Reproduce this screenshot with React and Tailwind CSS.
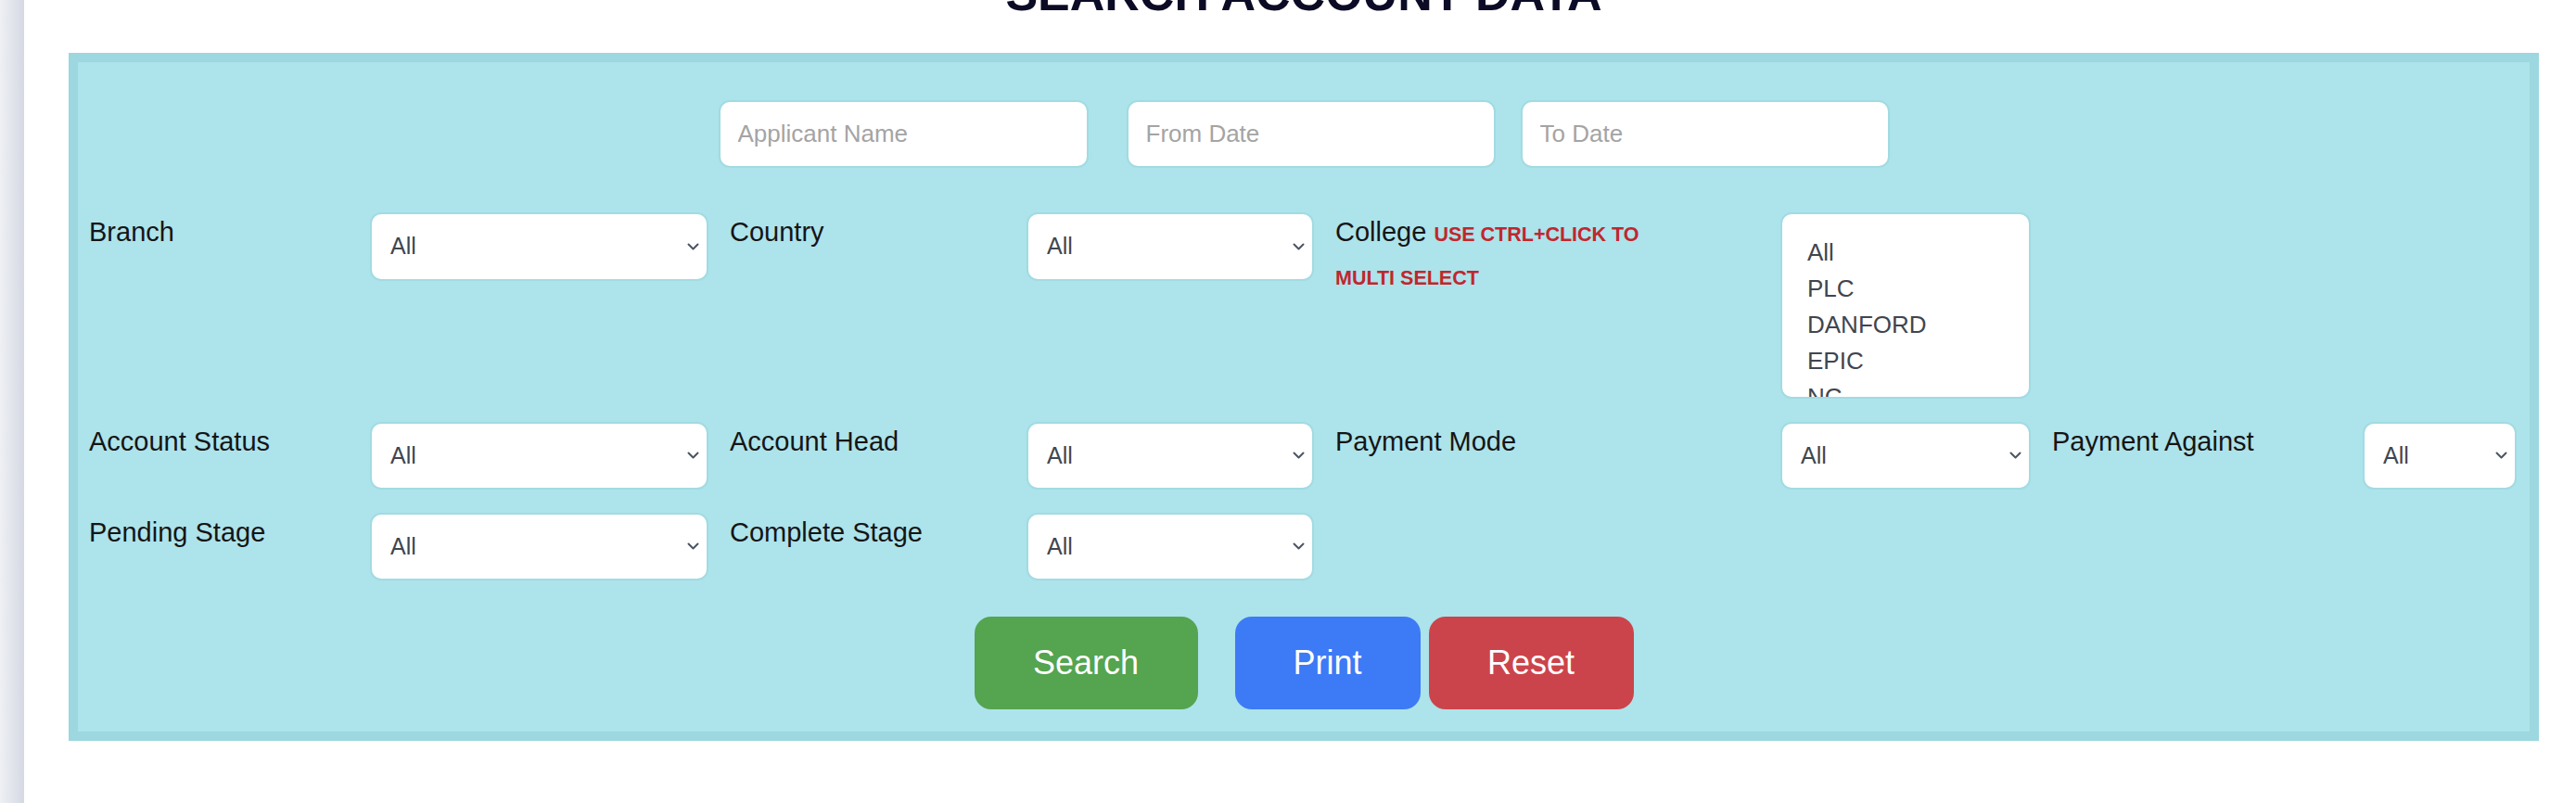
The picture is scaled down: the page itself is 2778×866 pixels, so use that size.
import React from "react";

function Chevron() {
  return (
    <svg width="13" height="9" viewBox="0 0 13 9" className="shrink-0">
      <polyline points="1.5,1.5 6.5,6.5 11.5,1.5" fill="none" stroke="#4b5563" strokeWidth="2" strokeLinecap="round" strokeLinejoin="round" />
    </svg>
  );
}

function Select({ h = "h-[73px]" }) {
  return (
    <div className={`${h} w-full self-start rounded-[12px] bg-white border-2 border-[#a2dbe2] flex items-center justify-between pl-[20px] pr-[8px] text-[25px] text-[#3f4650]`}>
      <span>All</span>
      <Chevron />
    </div>
  );
}

function Label({ children, first }) {
  return (
    <div className={`${first ? "pl-[12px]" : "pl-[23px]"} text-[29px] leading-[1.5] text-[#151515] self-start`}>
      {children}
    </div>
  );
}

export default function App() {
  const inputCls =
    "h-[73px] rounded-[12px] bg-white border-2 border-[#a2dbe2] pl-[19px] text-[26px] text-[#3f4650] placeholder:text-[#a4a4a4] outline-none";
  return (
    <div className="flex w-[2778px] h-[866px] bg-white overflow-hidden font-['Liberation_Sans',Arial,sans-serif]">
      <div className="w-[26px] h-full bg-gradient-to-r from-[#eef0f4] to-[#d5d9e3] shrink-0" />
      <div className="flex flex-col ml-[48px] w-[2664px]">
        <h1 className="mt-[-35px] mb-[35px] text-center font-bold text-[52px] leading-[57px] text-[#0b0b26]">
          SEARCH ACCOUNT DATA
        </h1>
        <div className="border-[10px] border-[#9dd7df] bg-[#ade3eb] pt-[41px] pb-[24px]">
          <div className="flex justify-center">
            <input className={`${inputCls} w-[399px] mr-[41px]`} placeholder="Applicant Name" />
            <input className={`${inputCls} w-[398px] mr-[27px]`} placeholder="From Date" />
            <input className={`${inputCls} w-[398px]`} placeholder="To Date" />
          </div>

          <div className="mt-[48px] grid grid-cols-[315px_365px_343px_310px_503px_270px_358px_166px] gap-y-[25px]">
            <Label first>Branch</Label>
            <Select h="h-[74px]" />
            <Label>Country</Label>
            <Select h="h-[74px]" />
            <div className="pl-[23px] self-start">
              <div className="text-[29px] leading-[1.5] text-[#151515]">
                College{" "}
                <span className="text-[21.5px] font-bold text-[#c0272d]">USE CTRL+CLICK TO</span>
              </div>
              <div className="mt-[15px] text-[21.5px] leading-[24px] font-bold text-[#c0272d]">MULTI SELECT</div>
            </div>
            <div className="h-[201px] rounded-[12px] bg-white border-2 border-[#a2dbe2] overflow-hidden pt-[22px] pl-[27px] text-[26px] text-[#3f4650]">
              {["All", "PLC", "DANFORD", "EPIC", "NC"].map((o) => (
                <div key={o} className="h-[39px] leading-[39px]">{o}</div>
              ))}
            </div>
            <div />
            <div />

            <Label first>Account Status</Label>
            <Select />
            <Label>Account Head</Label>
            <Select />
            <Label>Payment Mode</Label>
            <Select />
            <Label>Payment Against</Label>
            <Select />

            <Label first>Pending Stage</Label>
            <Select />
            <Label>Complete Stage</Label>
            <Select />
          </div>

          <div className="mt-[39px] flex justify-center text-white text-[36px]">
            <button className="w-[241px] h-[100px] rounded-[18px] bg-[#54a450] mr-[40px]">Search</button>
            <button className="w-[200px] h-[100px] rounded-[18px] bg-[#3d7af5] mr-[9px]">Print</button>
            <button className="w-[221px] h-[100px] rounded-[18px] bg-[#cc444b]">Reset</button>
          </div>
        </div>
      </div>
    </div>
  );
}
